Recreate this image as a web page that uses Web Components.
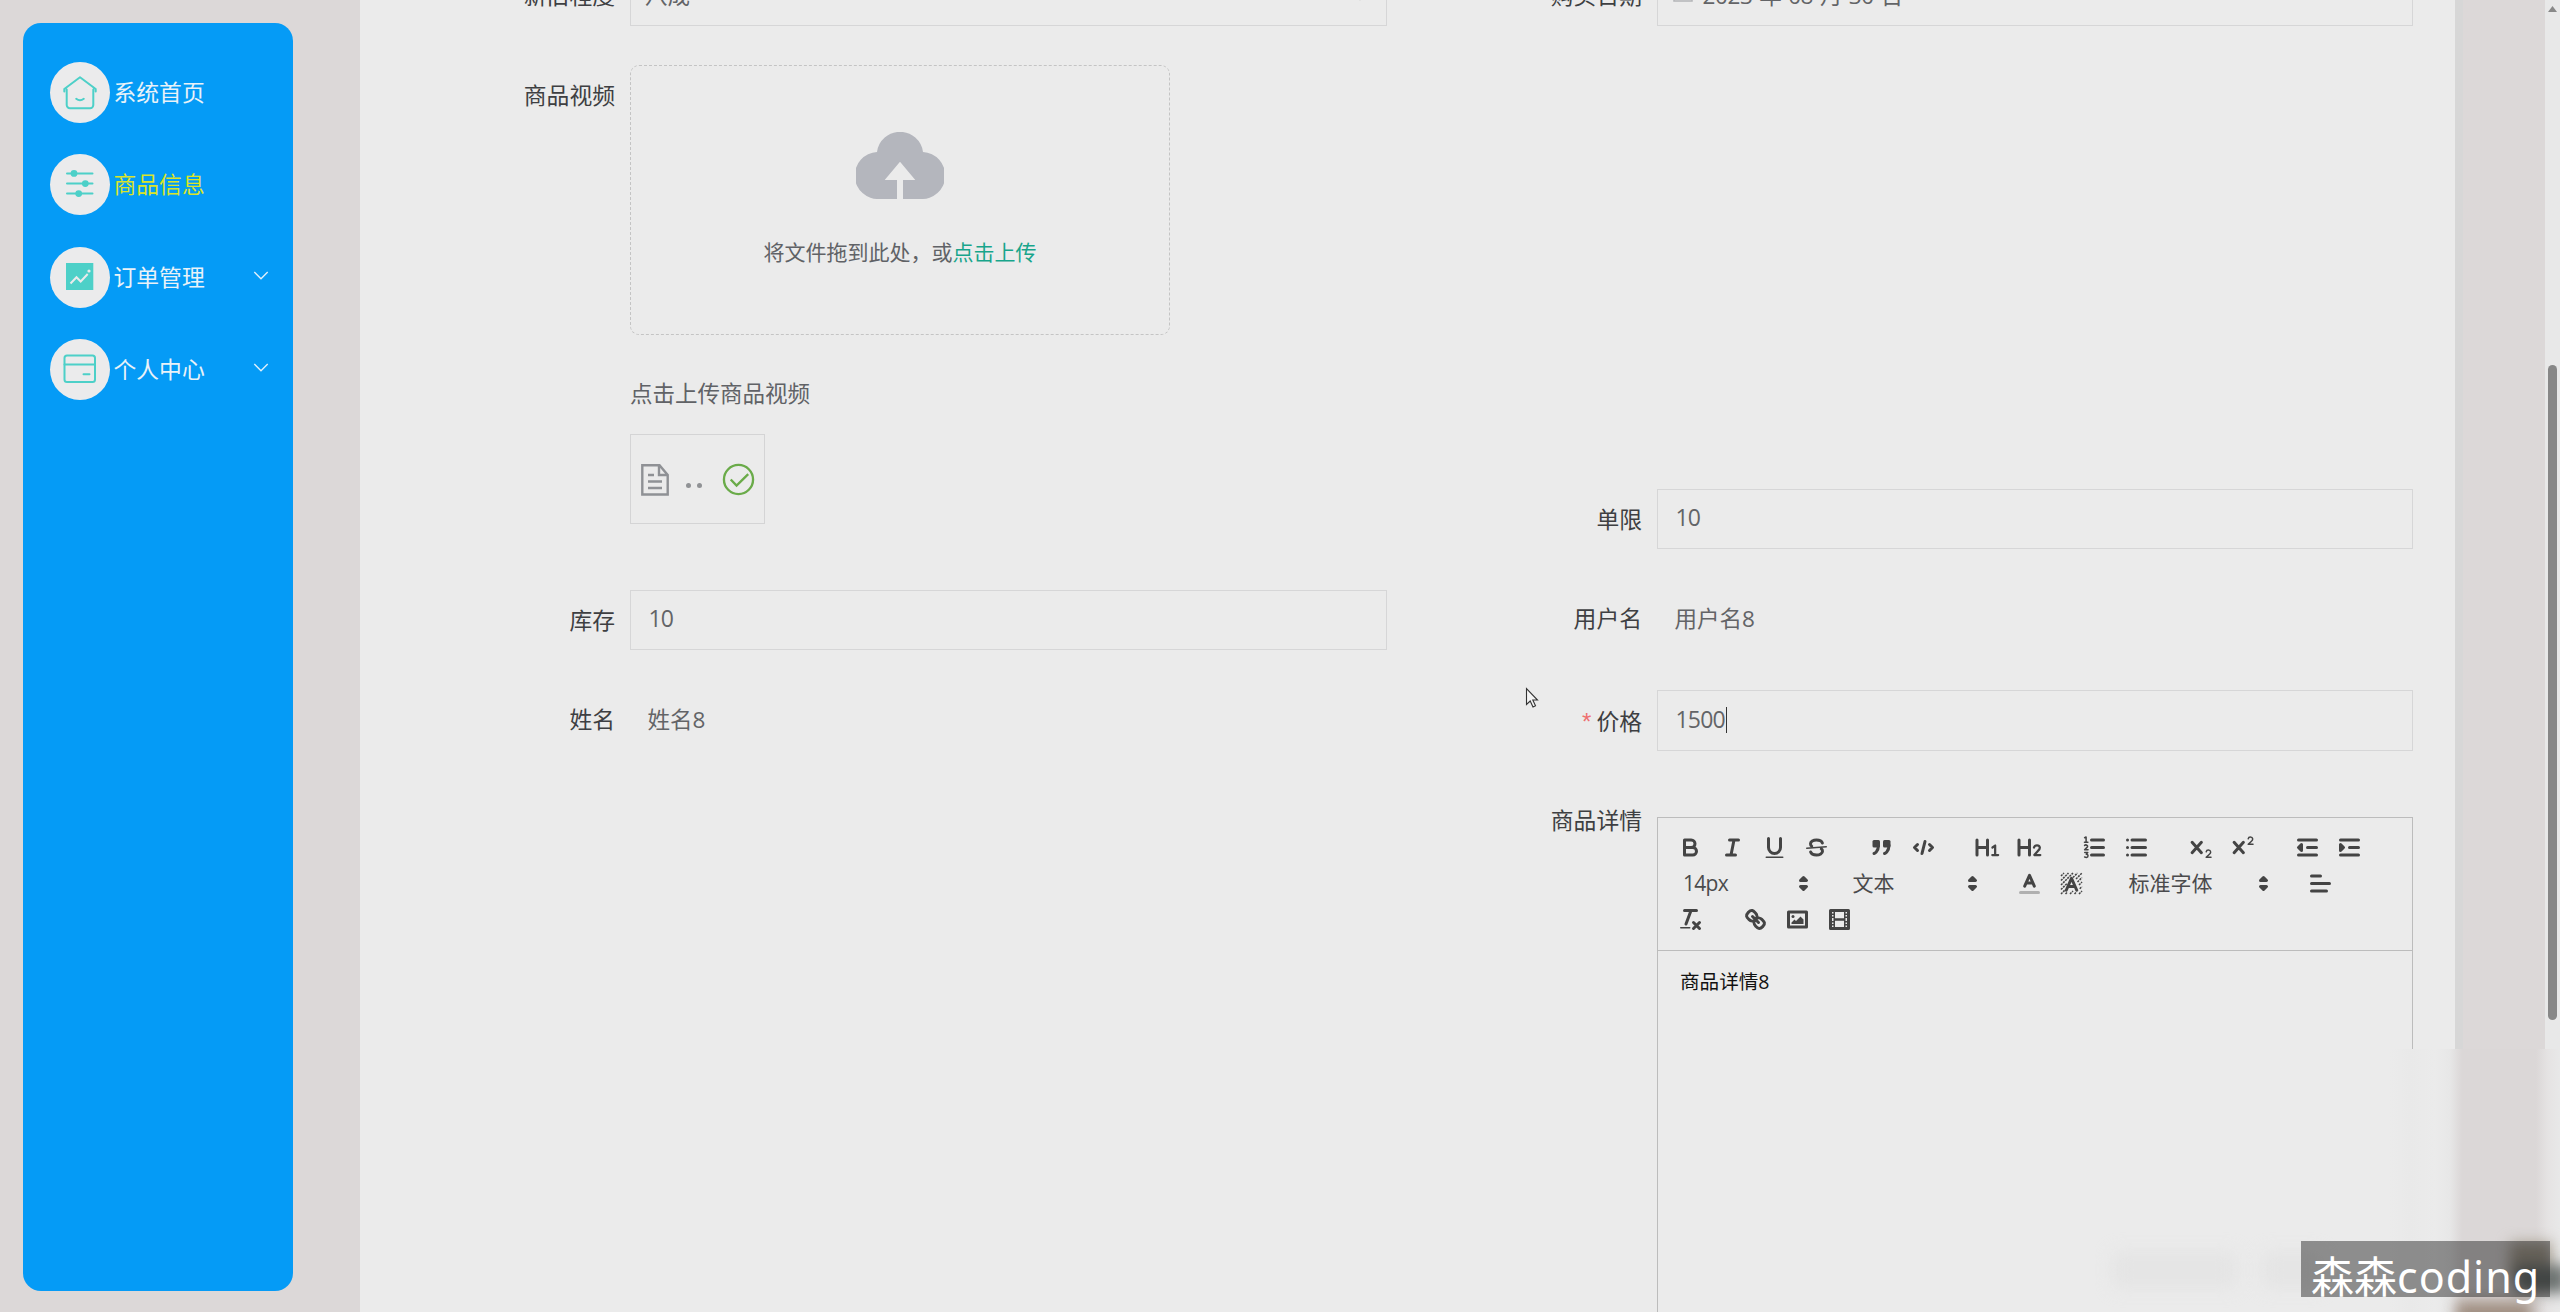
<!DOCTYPE html>
<html lang="zh-CN">
<head>
<meta charset="utf-8">
<title>商品信息</title>
<style>
html,body{margin:0;height:1312px;overflow:hidden}
body{background:#dcd8d8;font-family:"Open Sans","Noto Sans CJK SC",sans-serif;font-size:22.5px}
</style>
</head>
<body>
<admin-page></admin-page>
<script>
const define = (name, html, setup) => {
  const tpl = document.createElement('template');
  tpl.innerHTML = html;
  customElements.define(name, class extends HTMLElement {
    connectedCallback() {
      if (this.shadowRoot) return;
      const root = this.attachShadow({mode: 'open'});
      root.appendChild(tpl.content.cloneNode(true));
      if (setup) setup(this, root);
    }
  });
};

define('nav-item', `
<style>
:host{display:flex;align-items:center;height:60px;color:#e9f2f8;line-height:60px}
.ic{width:60px;height:61px;border-radius:50%;background:#ebebec;flex:none;margin-right:3.500px}
.ic ::slotted(svg){display:block;width:60px;height:60px}
.t{flex:1;font-size:22.800px;padding-top:1px}
:host([active]){color:#dbe42a}
.arrow{display:none;width:16px;height:9px;fill:none;stroke:#e0effa;stroke-width:1.4}
:host([expandable]) .arrow{display:block;margin-top:-3px}
</style>
<div class="ic"><slot name="icon"></slot></div><span class="t"><slot></slot></span>
<svg class="arrow" viewBox="0 0 16 9"><path d="M1.3 1 8 7.7 14.7 1"/></svg>`);

define('side-nav', `
<style>
:host{display:flex;flex-direction:column;gap:32.3px;box-sizing:border-box;width:270px;height:1268px;margin:23px 67px 0 23px;padding:39.500px 24px 0 27px;background:#059bf6;border-radius:18px;flex:none}
svg{fill:none;stroke:#4dd0c8;stroke-width:2;stroke-linecap:round;stroke-linejoin:round}
</style>
<nav-item>系统首页<svg slot="icon" viewBox="0 0 60 60"><path d="M14.3 29.5V27L30 15.2 45.7 27v2.5M16.7 27.5V43a3.2 3.2 0 0 0 3.2 3.2H40.100a3.2 3.2 0 0 0 3.2-3.2V27.500M26.200 36.800q3.800 3 7.600 0"/></svg></nav-item>
<nav-item active>商品信息<svg slot="icon" viewBox="0 0 60 60"><path d="M17 19.400H42.500M17 29.600H42.500M17 39.600H42.500"/><g fill="#4dd0c8" stroke="none"><circle cx="24" cy="19.400" r="3.400"/><circle cx="35.300" cy="29.600" r="3.400"/><circle cx="28.700" cy="39.600" r="3.400"/></g></svg></nav-item>
<nav-item expandable>订单管理<svg slot="icon" viewBox="0 0 60 60"><rect x="16" y="16" width="27.300" height="27" fill="#4dd0c8" stroke="none"/><path stroke="#ebebec" stroke-linecap="butt" stroke-linejoin="miter" d="m20.500 36.500 6-6.200 4.200 4.200 7-7.500"/><circle cx="39" cy="24" r="1.600" fill="#ebebec" stroke="none"/></svg></nav-item>
<nav-item expandable>个人中心<svg slot="icon" viewBox="0 0 60 60"><rect x="14.500" y="16.500" width="30.500" height="26.500" rx="2.500"/><path d="M14.500 25.500H45M33.500 35.200h6"/></svg></nav-item>`);

define('form-item', `
<style>
:host{display:flex;gap:15px;align-items:flex-start}
.l{width:165px;flex:none;text-align:right;line-height:61px;height:60px;color:#3e3f42;white-space:nowrap;font-size:22.800px}
.req{color:#ee7070;margin-right:5px;display:none;font-family:"Liberation Sans",sans-serif;font-size:24px;line-height:1}
:host([required]) .req{display:inline}
:host([required]) .l{line-height:63px}
.c{flex:1;min-width:0}
</style>
<div class="l"><span class="req">*</span><span class="n"></span></div><div class="c"><slot></slot></div>`,
(el, r) => { r.querySelector('.n').textContent = el.getAttribute('label'); });

define('text-field', `
<style>
:host{display:flex;align-items:center;box-sizing:border-box;height:60.500px;padding:0 17.500px;border:1.500px solid #d6d6d7;color:#636467;line-height:56px;font-size:23px;letter-spacing:-.8px}
.v{margin-top:-3px;white-space:pre}
:host([select]),:host([date]){letter-spacing:0;font-size:22.500px}
:host([select]){padding-left:14px}
:host([date]){letter-spacing:-.4px;word-spacing:1.400px}
:host([select]) .v,:host([date]) .v{margin-top:2px}
.caret{display:none;width:1px;height:26px;background:#333;margin:-1px 0 0 1px}
:host([focused]) .caret{display:block}
.dd{display:none;margin-left:auto;margin-right:2px;width:14px;height:9px;fill:none;stroke:#aaa;stroke-width:1.500}
:host([select]) .dd{display:block;margin-top:3px}
.cal{display:none;width:20px;height:20px;margin:-4px 10px 0 -3px;fill:none;stroke:#b4b5b8;stroke-width:1.500}
:host([date]) .cal{display:block}
</style>
<svg class="cal" viewBox="0 0 20 20"><path d="M1 3h18v15H1zM1 8h18M6 1v4M14 1v4"/></svg>
<span class="v"><slot></slot></span><i class="caret"></i>
<svg class="dd" viewBox="0 0 14 9"><path d="m1 1 6 6.500 6-6.500"/></svg>`);

define('text-value', `<style>:host{display:block;height:60px;line-height:61px;padding-left:17.500px;color:#636467}</style><slot></slot>`);

define('video-upload', `
<style>
:host{display:block;color:#606266}
.drop{box-sizing:border-box;width:540px;height:270px;border:1.500px dashed #c4c4c4;border-radius:9px;display:flex;flex-direction:column;align-items:center;font-size:21px}
.drop svg{width:88px;height:67px;fill:#b4b6bd;margin:66px 0 37px}
.drop p{margin:0;line-height:32px}
.drop em{font-style:normal;color:#18a58b}
.tip{margin:42px 0 23px;line-height:34px;height:34px}
.file{box-sizing:border-box;width:135px;height:90px;border:1.500px solid #d4d4d5;display:flex;align-items:center;padding:2px 0 0 10px}
.file svg{flex:none;fill:none}
.dots{display:flex;gap:6px;margin:12px 20px 0 17px}
.dots i{width:5px;height:5px;border-radius:50%;background:#909295}
</style>
<div class="drop"><svg viewBox="0 0 88 67"><path d="M23.500 67A23.500 23.500 0 0 1 21 20 23.200 23.200 0 0 1 67 20 23.500 23.500 0 0 1 64.500 67H47V48H59.300L44 29.700 28.700 48H41V67Z"/></svg>
<p>将文件拖到此处，或<em>点击上传</em></p></div>
<div class="tip">点击上传商品视频</div>
<div class="file">
<svg width="28" height="32" viewBox="0 0 28 32" stroke="#8f9195" stroke-width="2.400"><path d="M1.300 1.300H18.500L26.700 11V30.500H1.300ZM18 1.500V11h8.500M7 11h6M7 17.500h14M7 24h14"/></svg>
<div class="dots"><i></i><i></i></div>
<svg width="33" height="33" viewBox="0 0 34 34" stroke="#6aab49" stroke-width="2.400"><circle cx="17" cy="17" r="15"/><path d="m9 17 6 6.300L27 11.500"/></svg>
</div>`);

/* 18-unit toolbar icons; t/m = thinner strokes, f = filled, fs = filled and stroked */
const two = (x, y) => `<path class="t" d="M${x} ${y+1.2}q.2-1.200 1.500-1.200t1.500 1.300q0 .8-1 1.700L${x} ${y+4.800}H${x+3.200}"/>`;
const icons = {
  bold: '<path d="M5 4H9.500a2.500 2.500 0 0 1 0 5H5ZM5 9h5.500a2.500 2.500 0 0 1 0 5H5Z"/>',
  italic: '<path d="M7 4h6M5 14h6M8 14 10 4"/>',
  underline: '<path d="M5 3V9a4 4 0 0 0 8 0V3"/><rect class="f" x="3" y="15" width="12" height="1" rx=".5"/>',
  strike: '<path class="t" d="M15.500 8.500 2.500 9.500"/><path d="M12.900 6C12.500 4.800 10.900 4 9 4 6.800 4 5 5.100 5 6.500c0 .8.200 1.200.8 1.600M5.100 12c.4 1.200 2 2 3.900 2 2.200 0 4-1.100 4-2.500 0-.8-.2-1.200-.8-1.600"/>',
  quote: '<rect class="f" x="3" y="4" width="5" height="5" rx="1"/><rect class="f" x="10" y="4" width="5" height="5" rx="1"/><path d="M7 7.500c0 4.500-3 5.500-3 5.500M14 7.500c0 4.500-3 5.500-3 5.500"/>',
  code: '<path d="M5 7 3 9l2 2M13 7l2 2-2 2M10 5 8 13"/>',
  h1: '<path d="M2 4V14M9 4V14M2 9H9"/><path class="m" d="m12.300 9 1.800-1.300V14M12.200 14h3.900"/>',
  h2: '<path d="M2 4V14M9 4V14M2 9H9"/><path class="m" d="M12 9q.4-1.400 2-1.400t1.900 1.500q0 1-1.300 2.200L12.200 14h4"/>',
  ordered: '<path d="M7 4h8M7 9h8M7 14h8"/><path class="t" d="M2.400 2.500 3.400 2V5.400M2.300 5.500h2.300M2.400 7.600q.8-.7 1.600 0t0 1.300L2.400 10.500h2.300M2.500 12.300h2l-1 1.200q1.200 0 1.200 1t-1.100 1.100l-1.200-.3"/>',
  bullet: '<path d="M6 4h9M6 9h9M6 14h9M3 4h.01M3 9h.01M3 14h.01"/>',
  sub: '<path d="M3.400 5.500 9.600 12.500M9.600 5.500 3.400 12.500"/>' + two(12.800, 10.700),
  sup: '<path d="M3.400 5.500 9.600 12.500M9.600 5.500 3.400 12.500"/>' + two(12.800, 2),
  outdent: '<path d="M3 4h12M3 14h12M9 9h6"/><path class="fs" d="M5 7v4L3 9Z"/>',
  indent: '<path d="M3 4h12M3 14h12M9 9h6"/><path class="fs" d="M3 7v4l2-2Z"/>',
  color: '<path style="stroke:#b0b0b0" d="M3 15h12"/><path d="M5.800 10.800 9 3.500l3.200 7.300M7 8.700h4"/>',
  fill: '<path class="t" style="stroke-linecap:butt" stroke-dasharray="1.400 .6" d="M2 4 4 2M2 7 7 2M2 10 10 2M2 13 6 9M10 5 13 2M2 16 5 13M12 6 16 2M5 16 6 15M13 8 16 5M14 10 16 8M14.500 12.500 16 11M8 16 10 14M11 16 12 15M14 16 16 14"/><path d="M5.500 13.500 9 5.500l3.500 8M7 11h4"/>',
  align: '<path d="M3 9h12M3 14h10M3 4h6"/>',
  clean: '<path d="M5 3h8M6 12 9.350 3M11 11l4 4M15 11l-4 4"/><rect class="f" x="2" y="14" width="7" height="1" rx=".5"/>',
  link: '<path d="M7 7 11 11M8.900 4.577a3.476 3.476 0 0 1 .36 4.679A3.476 3.476 0 0 1 4.577 8.900C3.185 7.500 2.035 6.400 4.217 4.217S7.500 3.185 8.900 4.577ZM13.423 9.100a3.476 3.476 0 0 0-4.679-.36 3.476 3.476 0 0 0 .36 4.679c1.392 1.392 2.500 2.542 4.679.36S14.815 10.500 13.423 9.100Z"/>',
  image: '<path d="M3 4h12v10H3z"/><circle class="f" cx="6" cy="7" r="1"/><path class="f" d="M5 12v-1l2-2 1 1 3-3 2 2v3Z"/>',
  video: '<path d="M3 3h12v12H3z"/><path class="f" d="M5 3h1v12H5zM12 3h1v12h-1zM5 8.200h8v1.600H5zM3 5h3v1H3zM3 7h3v1H3zM3 10h3v1H3zM3 12h3v1H3zM12 5h3v1h-3zM12 7h3v1h-3zM12 10h3v1h-3zM12 12h3v1h-3z"/>',
  updown: '<path class="fs" d="m7 11 2 2 2-2ZM7 7l2-2 2 2Z"/>'
};
define('tool-icon', `
<style>
:host{display:flex;width:42px;height:36px;align-items:center;justify-content:center;flex:none}
:host([name=updown]){width:27px;margin-left:auto}
svg{width:27px;height:27px;fill:none;stroke:#444;stroke-width:2;stroke-linecap:round;stroke-linejoin:round}
.t{stroke-width:1}.m{stroke-width:1.500}.f{fill:#444;stroke:none}.fs{fill:#444}
</style><svg viewBox="0 0 18 18"></svg>`,
(el, r) => { r.querySelector('svg').innerHTML = icons[el.getAttribute('name')]; });

define('tool-picker', `
<style>:host{display:flex;align-items:center;box-sizing:border-box;height:36px;width:147px;padding-left:13.500px;font-size:21px;color:#4a4a4c;line-height:36px;white-space:nowrap}
span{margin-top:-1px}</style>
<span><slot></slot></span><tool-icon name="updown"></tool-icon>`);

define('rich-editor', `
<style>
:host{display:block;margin-top:27px;height:600px;box-sizing:border-box;border:1px solid #bcbcbc}
.bar{box-sizing:border-box;height:133px;padding:11.500px 0 0 11.500px;border-bottom:1px solid #bcbcbc}
.row,.g{display:flex}.row{gap:22.500px}
.body{padding:16px 22px;font-size:19.600px;line-height:30px;color:#111}
.px{letter-spacing:-.7px}
.wide{width:162px}
</style>
<div class="bar">
<div class="row"><div class="g" data-i="bold italic underline strike"></div><div class="g" data-i="quote code"></div><div class="g" data-i="h1 h2"></div><div class="g" data-i="ordered bullet"></div><div class="g" data-i="sub sup"></div><div class="g" data-i="outdent indent"></div></div>
<div class="row"><tool-picker class="px">14px</tool-picker><tool-picker>文本</tool-picker><div class="g" data-i="color fill"></div><tool-picker class="wide">标准字体</tool-picker><div class="g" data-i="align"></div></div>
<div class="row"><div class="g" data-i="clean"></div><div class="g" data-i="link image video"></div></div>
</div>
<div class="body"><slot></slot></div>`,
(el, r) => r.querySelectorAll('[data-i]').forEach(g => {
  g.innerHTML = g.dataset.i.split(' ').map(n => `<tool-icon name="${n}"></tool-icon>`).join('');
}));

define('page-scrollbar', `
<style>
:host{display:block;box-sizing:border-box;width:15px;height:1312px;background:#e8e8e8;padding:6px 3px 0}
svg{display:block;width:9px;height:6px;fill:#888}
i{display:block;height:655px;border-radius:5px;background:#878787;margin-top:353px}
</style><svg viewBox="0 0 9 6"><path d="M4.500 0 9 6H0z"/></svg><i></i>`);

define('water-mark', `
<style>
:host{position:absolute;left:2090px;top:1049px;width:470px;height:263px;overflow:hidden}
.haze{position:absolute;left:300px;top:0;width:170px;height:263px;background:linear-gradient(90deg,#ebebeb 0,#e9e9e9 20px,#ebebeb 45px,#e7e7e7 60px,#dbd7d7 72px,#dbd7d7 146px,#e5e3e3 158px,#e8e8e8)}
.b{position:absolute;filter:blur(7px)}
.faint{left:22px;top:203px;width:125px;height:36px;background:#dedede;opacity:.5;filter:blur(9px)}
.faint.two{left:172px;width:60px}
.d1{left:420px;top:193px;width:42px;height:36px;background:#a8a092}
.d2{left:425px;top:216px;width:52px;height:28px;background:#6d7371}
.d3{left:366px;top:252px;width:76px;height:30px;background:#a08f82}
.tag{position:absolute;left:211px;top:192px;width:249px;height:56px;background:rgba(0,0,0,.4);color:#fff;font-family:"Noto Sans","Noto Sans CJK SC",sans-serif;font-size:43px;line-height:71px;padding-left:10px;box-sizing:border-box;white-space:nowrap}
.lat{letter-spacing:1px}
</style>
<div class="haze"></div><div class="b faint"></div><div class="b faint two"></div><div class="b d1"></div><div class="b d2"></div><div class="b d3"></div>
<div class="tag">森森<span class="lat">coding</span></div>`);

define('admin-page', `
<style>
:host{display:flex;position:relative;width:2560px;height:1312px;overflow:hidden}
main{box-sizing:border-box;width:2103px;height:1312px;background:#ebebeb;border-right:8px solid #d7d7d7;padding-left:90px;display:flex;gap:90px;overflow:hidden}
.col{display:flex;flex-direction:column;margin-top:-35px;width:937px;flex:none}
.col.r{width:936px}
page-scrollbar{margin-left:auto}
.cur{position:absolute;left:1525px;top:687px;width:14px;height:22px}
</style>
<side-nav></side-nav>
<main>
<div class="col">
<form-item label="新旧程度"><text-field select>八成</text-field></form-item>
<form-item label="商品视频" style="margin-top:39px"><video-upload></video-upload></form-item>
<form-item label="库存" style="margin-top:66px"><text-field>10</text-field></form-item>
<form-item label="姓名" style="margin-top:39px"><text-value>姓名8</text-value></form-item>
</div>
<div class="col r">
<form-item label="购买日期"><text-field date>2023 年 08 月 30 日</text-field></form-item>
<form-item label="单限" style="margin-top:463px"><text-field>10</text-field></form-item>
<form-item label="用户名" style="margin-top:39px"><text-value>用户名8</text-value></form-item>
<form-item label="价格" required style="margin-top:42px"><text-field focused>1500</text-field></form-item>
<form-item label="商品详情" style="margin-top:39.500px"><rich-editor>商品详情8</rich-editor></form-item>
</div>
</main>
<page-scrollbar></page-scrollbar>
<svg class="cur" viewBox="0 0 14 22"><path d="M1.500 1.500V17.500L5.200 14 8 20l2.500-1.200L7.800 13H12.500Z" fill="#f4f4f4" stroke="#333" stroke-width="1.100"/></svg>
<water-mark></water-mark>`);
</script>
</body>
</html>
